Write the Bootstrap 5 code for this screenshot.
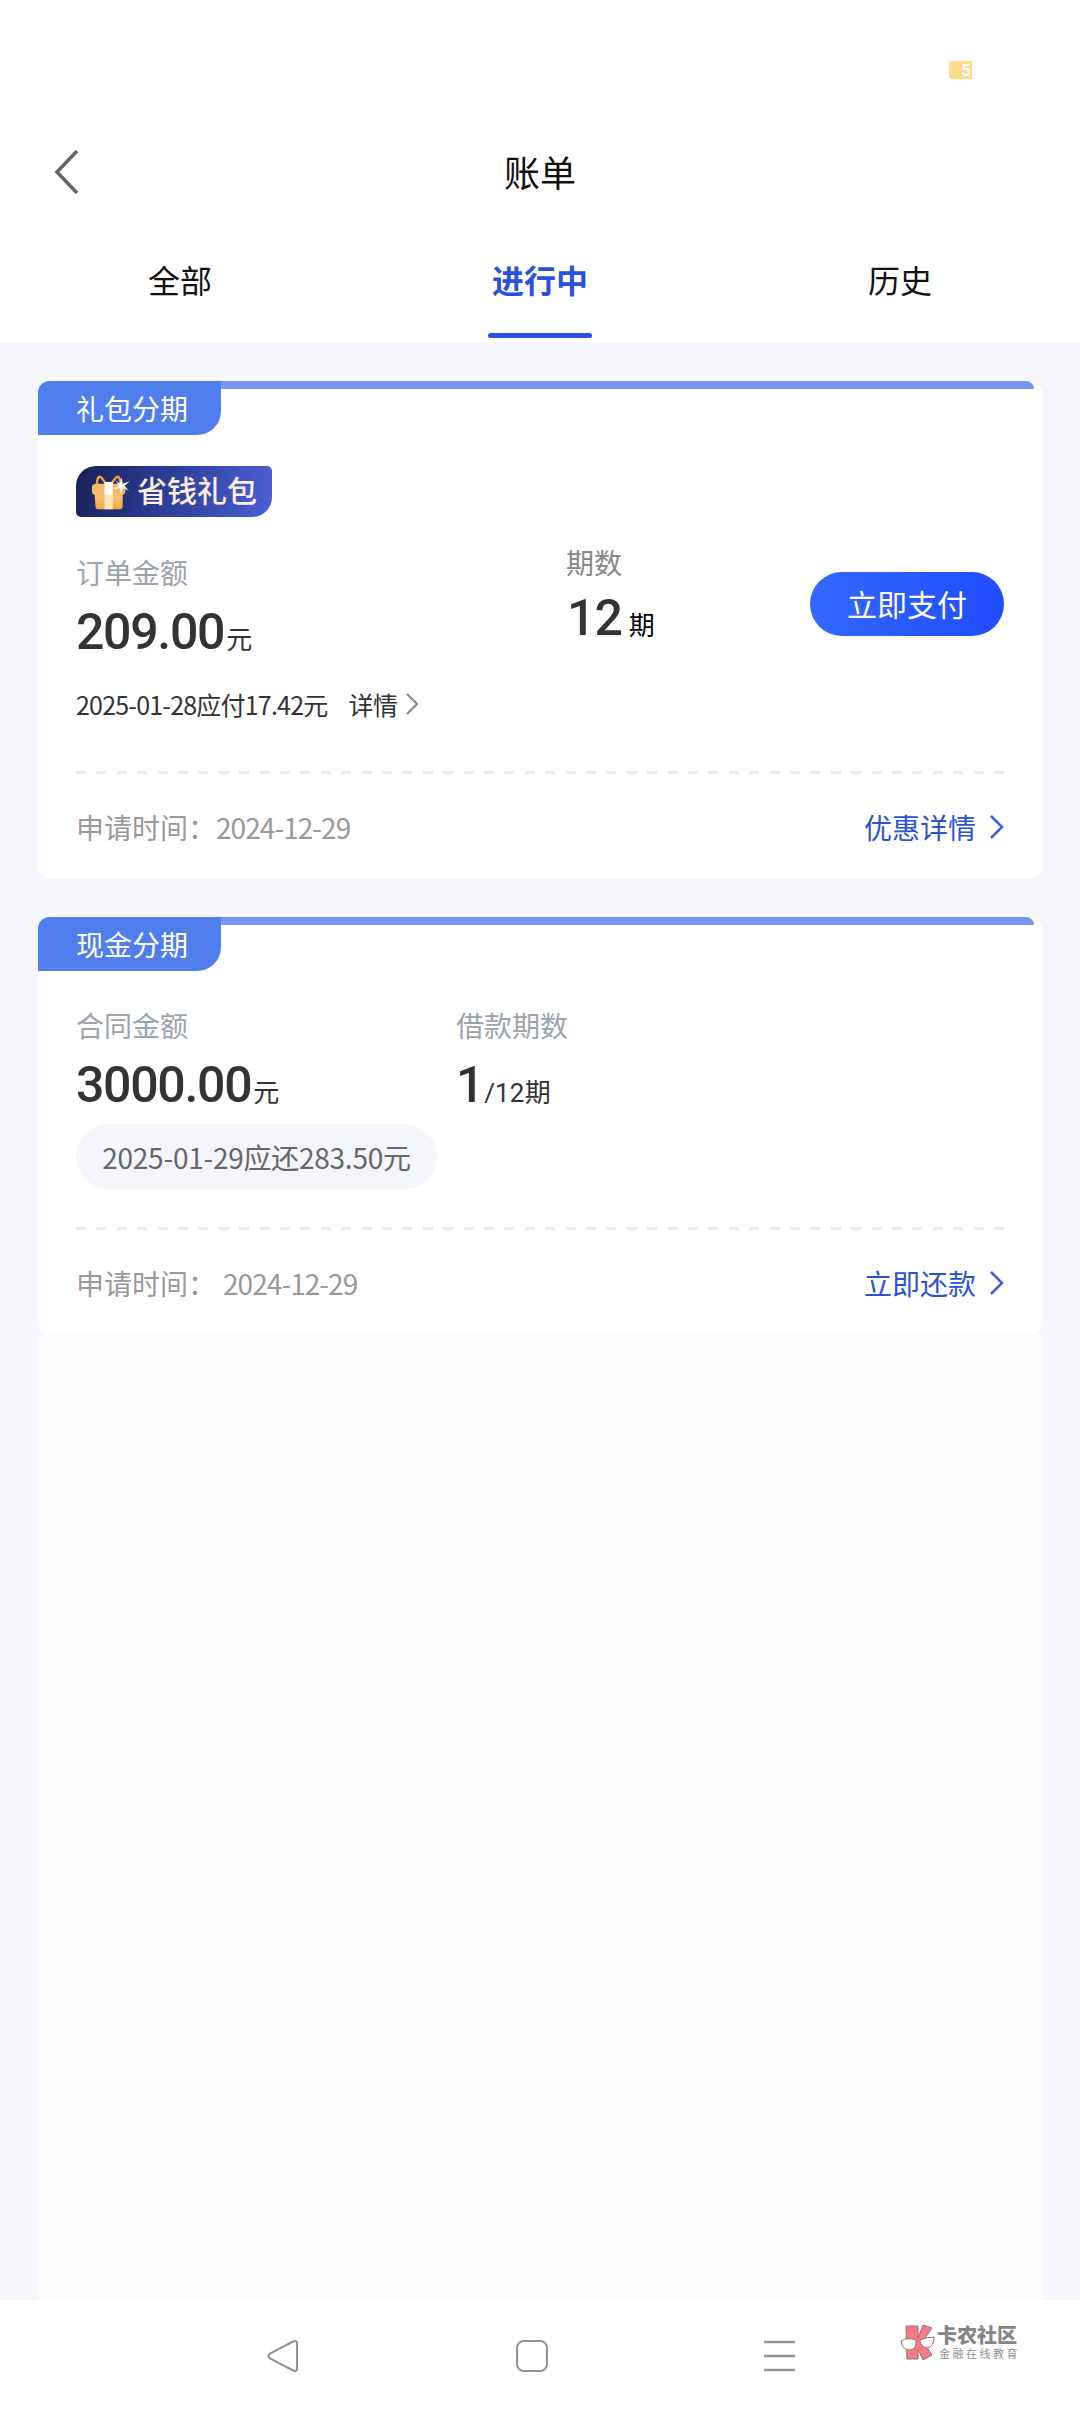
<!DOCTYPE html>
<html lang="zh-CN">
<head>
<meta charset="utf-8">
<meta name="viewport" content="width=device-width, initial-scale=1">
<title>账单</title>
<link href="https://cdn.jsdelivr.net/npm/bootstrap@5.3.0/dist/css/bootstrap.min.css" rel="stylesheet">
<style>
  body { font-family: "Noto Sans CJK SC", sans-serif; background: #f5f7fc; color: #333; height: 2412px; font-size: 28px; line-height: 40px; overflow-x: hidden; }
  svg { display: block; flex: none; }
  .screen { width: 1080px; height: 2412px; }
  .status-bar { height: 122px; padding: 61px 108px 0 0; }
  .battery { width: 23px; height: 18px; background: #fadc8c; border-radius: 4px 0 0 4px; color: #fff; font: 700 17px/18px Roboto, sans-serif; padding-right: 1px; }
  .title-bar { height: 100px; padding-left: 53px; }
  .title-bar h1 { font-size: 36px; line-height: 52px; font-weight: 400; color: #111; margin: -3px 79px 0 0; }
  .tabs { height: 121px; }
  .tabs .nav-link { height: 121px; padding: 33px 0 0; font-size: 32px; line-height: 48px; color: #111; border-radius: 0; }
  .tabs .nav-link.active { color: #2a50e0; font-weight: 700; background: none; }
  .tabs .nav-link.active::after { content: ""; display: block; width: 104px; height: 5px; border-radius: 3px; background: #2b50e8; margin: 30px auto 0; }
  .bills { margin: 38px 38px 0; }
  .bill { border: 0; border-radius: 12px; height: 498px; margin-bottom: 38px; }
  .bill-cash { height: 417px; margin-bottom: 0; }
  .bill-top { height: 54px; margin-right: 8px; background: linear-gradient(#7694f1, #7694f1) 0 0 / 100% 8px no-repeat; border-radius: 12px 8px 0 0; }
  .bill-tag { width: 183px; height: 54px; padding-left: 38px; line-height: 54px; color: #fff; background: #507eec; border-radius: 12px 0 24px 0; }
  .inner { padding: 0 38px; }
  .promo { width: 196px; height: 51px; margin-top: 31px; padding-left: 15px; gap: 8px; border-radius: 20px 5px 20px 5px; background: linear-gradient(100deg, #192156 0%, #2b3b91 42%, #4b60d6 100%); color: #fdeee2; font-size: 30px; font-weight: 500; line-height: 48px; }
  .promo span { padding-bottom: 5px; }
  .cap { color: #9ca3aa; line-height: 40px; }
  .cap-dark { color: #888; }
  .amount { font-family: Roboto, "Noto Sans CJK SC", sans-serif; font-size: 50px; font-weight: 500; line-height: 50px; color: #333; letter-spacing: -1.3px; margin-top: 15px; }
  .term .amount { margin-top: 11px; padding-left: 1px; letter-spacing: -1px; }
  .unit { font-family: "Noto Sans CJK SC", sans-serif; font-size: 26px; line-height: 50px; font-weight: 400; color: #333; letter-spacing: 0; }
  .unit-yuan { margin-left: 2px; }
  .unit-gap { margin-left: 1px; }
  .of-terms { font-family: Roboto, "Noto Sans CJK SC", sans-serif; margin-left: 1px; letter-spacing: .2px; }
  .figures { height: 169px; padding-top: 35px; }
  .bill-cash .figures { height: 153px; padding-top: 34px; }
  .fig-a { width: 490px; }
  .bill-cash .fig-a { width: 380px; }
  .term { margin-top: -10px; }
  .pay { width: 194px; height: 64px; border: 0; border-radius: 32px; padding: 0 0 3px; margin-top: 20px; font-size: 30px; line-height: 60px; color: #fff; background: linear-gradient(90deg, #3369ff, #1f4cff); }
  .due { font-size: 25px; line-height: 36px; letter-spacing: -.8px; }
  .due-more { margin-left: 21px; letter-spacing: -.4px; }
  .due-arrow { margin-left: 7px; }
  .rule { height: 3px; margin-top: 49px; background: repeating-linear-gradient(90deg, #ebebeb 0 10px, transparent 10px 20.4px); }
  .bill-cash .rule { margin-top: 38px; }
  .foot { color: #999; height: 40px; margin-top: 33px; }
  .date { letter-spacing: -.95px; }
  .date-wide { margin-left: 7px; }
  .act { color: #2b52d4; gap: 14px; text-decoration: none; }
  .pill { width: 361px; height: 65px; border-radius: 33px; background: #f5f6fc; color: #666; line-height: 66px; letter-spacing: -.25px; }
  .rest { background: #fcfcfc; margin: 0 38px; }
  .sysnav { height: 112px; }
  .sysnav .back-key { margin-left: 267px; margin-right: 217px; }
  .sysnav .home-key { margin-right: 216px; }
  .brand { margin-left: 104px; margin-top: 24px; gap: 1px; align-self: flex-start; }
  .brand-name { font-size: 20px; font-weight: 900; line-height: 21px; color: #858585; }
  .brand-sub { font-size: 11px; line-height: 16px; letter-spacing: 2.5px; color: #909090; padding-left: 2px; }
</style>
</head>
<body>
<div class="screen d-flex flex-column">
  <header class="bg-white">
    <div class="status-bar d-flex justify-content-end"><div class="battery text-end">5</div></div>
    <div class="title-bar d-flex align-items-center">
      <svg width="26" height="44" viewBox="0 0 26 44" fill="none" stroke="#666" stroke-width="3.5"><path d="M24 1 4 22 24 43"/></svg>
      <h1 class="flex-grow-1 text-center">账单</h1>
    </div>
    <nav class="tabs nav nav-pills nav-justified">
      <a class="nav-link" href="#">全部</a>
      <a class="nav-link active" href="#">进行中</a>
      <a class="nav-link" href="#">历史</a>
    </nav>
  </header>

  <main class="bills">
    <section class="card bill">
      <div class="bill-top"><div class="bill-tag">礼包分期</div></div>
      <div class="inner">
        <div class="promo d-flex align-items-center">
          <svg width="38" height="38" viewBox="0 0 42 40" overflow="visible">
            <defs><linearGradient id="gold" x2="0" y2="1"><stop stop-color="#f9c57b"/><stop offset="1" stop-color="#f0a945"/></linearGradient></defs>
            <path d="M17 12C13 5 10 2 8.500 3.500S6 10 7 13M22 12c4-7 7-10 8.500-8.500s2.500 6 1.500 9" fill="none" stroke="#eda43c" stroke-width="2.600"/>
            <path d="M4 22h31v14q0 3-3 3H8q-3 0-3-3z" fill="url(#gold)"/>
            <path d="M1 15q0-4 5-4h28q4 0 4 4v3q0 6-6 6H7q-6 0-6-6z" fill="#f6b766"/>
            <path d="M15 9h9v30h-9z" fill="#fde3b8"/><path d="M15 9h9v14h-9z" fill="#fff"/>
            <path d="m34 4 1 7L43 8l-6 5 5 6-6.500-4L33 22l-1-6.500L25 17l6-4-4-6 5 4z" fill="#fff"/>
          </svg>
          <span>省钱礼包</span>
        </div>
        <div class="figures d-flex">
          <div class="fig-a"><div class="cap">订单金额</div><div class="amount">209.00<span class="unit unit-yuan">元</span></div></div>
          <div class="term flex-grow-1"><div class="cap cap-dark">期数</div><div class="amount">12<span class="unit text-black"> <span class="unit-gap">期</span></span></div></div>
          <button class="btn pay" type="button">立即支付</button>
        </div>
        <div class="due d-flex align-items-center">
          <span>2025-01-28应付17.42元</span><span class="due-more">详情</span>
          <svg class="due-arrow" width="14" height="24" viewBox="0 0 14 24" fill="none" stroke="#888" stroke-width="2"><path d="m2 2 10 10L2 22"/></svg>
        </div>
        <div class="rule"></div>
        <div class="foot d-flex justify-content-between">
          <div>申请时间：<span class="date">2024-12-29</span></div>
          <a class="act d-flex align-items-center" href="#">优惠详情<svg width="14" height="26" viewBox="0 0 14 26" fill="none" stroke="#3c5fe0" stroke-width="2.500"><path d="m1 2 11 11L1 24"/></svg></a>
        </div>
      </div>
    </section>

    <section class="card bill bill-cash">
      <div class="bill-top"><div class="bill-tag">现金分期</div></div>
      <div class="inner">
        <div class="figures d-flex">
          <div class="fig-a"><div class="cap">合同金额</div><div class="amount">3000.00<span class="unit unit-yuan">元</span></div></div>
          <div><div class="cap">借款期数</div><div class="amount">1<span class="unit of-terms">/12期</span></div></div>
        </div>
        <div class="pill text-center">2025-01-29应还283.50元</div>
        <div class="rule"></div>
        <div class="foot d-flex justify-content-between">
          <div>申请时间：<span class="date date-wide">2024-12-29</span></div>
          <a class="act d-flex align-items-center" href="#">立即还款<svg width="14" height="26" viewBox="0 0 14 26" fill="none" stroke="#3c5fe0" stroke-width="2.500"><path d="m1 2 11 11L1 24"/></svg></a>
        </div>
      </div>
    </section>
  </main>
  <div class="rest flex-grow-1"></div>

  <footer class="sysnav bg-white d-flex align-items-center">
    <svg class="back-key" width="32" height="34" viewBox="0 0 32 34" fill="none" stroke="#929292" stroke-width="2"><path d="M26 2.500 3 14.500q-3 2.500 0 5L26 31.500q4 1.500 4-2v-25q0-3.500-4-2z"/></svg>
    <svg class="home-key" width="32" height="34" viewBox="0 0 32 34" fill="none" stroke="#929292" stroke-width="2"><rect x="1" y="2" width="30" height="30" rx="7"/></svg>
    <svg width="32" height="34" viewBox="0 0 32 34" stroke="#929292" stroke-width="2.500"><path d="M0 3h31M0 17h31M0 31h31"/></svg>
    <div class="brand d-flex">
      <svg width="36" height="38" viewBox="0 0 36 38" stroke="#8c7474" stroke-width="1">
        <path d="M6 2h12v12L23 1l9 3-9 13 9 14-9 5-5-11v10H7z" fill="#f87a86"/>
        <path d="M1 17q7-4 15-1 1 9-6 10-8 0-9-9zM20 16q6-3 14-3 0 9-6 11-7 0-8-8z" fill="#fff"/>
      </svg>
      <div><div class="brand-name">卡农社区</div><div class="brand-sub">金融在线教育</div></div>
    </div>
  </footer>
</div>
<script src="https://cdn.jsdelivr.net/npm/bootstrap@5.3.0/dist/js/bootstrap.bundle.min.js"></script>
</body>
</html>
